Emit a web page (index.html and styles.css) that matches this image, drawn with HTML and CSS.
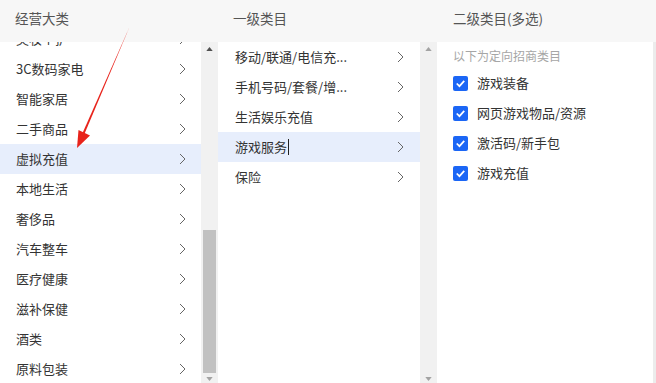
FILE: index.html
```html
<!DOCTYPE html>
<html lang="zh-CN">
<head>
<meta charset="utf-8">
<link rel="stylesheet" href="styles.css">
</head>
<body>
<div class="app">
  <div class="col col1">
    <div class="head">经营大类</div>
    <div class="body">
      <div class="list">
        <div class="inner scrolled">
          <div class="row"><span>美妆个护</span><svg class="chev" viewBox="0 0 7 12"><path d="M1 1 L6 6 L1 11"/></svg></div>
          <div class="row"><span>3C数码家电</span><svg class="chev" viewBox="0 0 7 12"><path d="M1 1 L6 6 L1 11"/></svg></div>
          <div class="row"><span>智能家居</span><svg class="chev" viewBox="0 0 7 12"><path d="M1 1 L6 6 L1 11"/></svg></div>
          <div class="row"><span>二手商品</span><svg class="chev" viewBox="0 0 7 12"><path d="M1 1 L6 6 L1 11"/></svg></div>
          <div class="row active"><span>虚拟充值</span><svg class="chev" viewBox="0 0 7 12"><path d="M1 1 L6 6 L1 11"/></svg></div>
          <div class="row"><span>本地生活</span><svg class="chev" viewBox="0 0 7 12"><path d="M1 1 L6 6 L1 11"/></svg></div>
          <div class="row"><span>奢侈品</span><svg class="chev" viewBox="0 0 7 12"><path d="M1 1 L6 6 L1 11"/></svg></div>
          <div class="row"><span>汽车整车</span><svg class="chev" viewBox="0 0 7 12"><path d="M1 1 L6 6 L1 11"/></svg></div>
          <div class="row"><span>医疗健康</span><svg class="chev" viewBox="0 0 7 12"><path d="M1 1 L6 6 L1 11"/></svg></div>
          <div class="row"><span>滋补保健</span><svg class="chev" viewBox="0 0 7 12"><path d="M1 1 L6 6 L1 11"/></svg></div>
          <div class="row"><span>酒类</span><svg class="chev" viewBox="0 0 7 12"><path d="M1 1 L6 6 L1 11"/></svg></div>
          <div class="row"><span>原料包装</span><svg class="chev" viewBox="0 0 7 12"><path d="M1 1 L6 6 L1 11"/></svg></div>
        </div>
      </div>
      <div class="sbar">
        <svg class="arr up dark" viewBox="0 0 8 5"><path d="M0 5 L4 0 L8 5Z"/></svg>
        <div class="track"><div class="thumb"></div></div>
        <svg class="arr down" viewBox="0 0 8 5"><path d="M0 0 L8 0 L4 5Z"/></svg>
      </div>
    </div>
  </div>
  <div class="col col2">
    <div class="head">一级类目</div>
    <div class="body">
      <div class="list">
        <div class="inner">
          <div class="row"><span>移动/联通/电信充...</span><svg class="chev" viewBox="0 0 7 12"><path d="M1 1 L6 6 L1 11"/></svg></div>
          <div class="row"><span>手机号码/套餐/增...</span><svg class="chev" viewBox="0 0 7 12"><path d="M1 1 L6 6 L1 11"/></svg></div>
          <div class="row"><span>生活娱乐充值</span><svg class="chev" viewBox="0 0 7 12"><path d="M1 1 L6 6 L1 11"/></svg></div>
          <div class="row active"><span>游戏服务<i class="caret"></i></span><svg class="chev" viewBox="0 0 7 12"><path d="M1 1 L6 6 L1 11"/></svg></div>
          <div class="row"><span>保险</span><svg class="chev" viewBox="0 0 7 12"><path d="M1 1 L6 6 L1 11"/></svg></div>
        </div>
      </div>
      <div class="sbar">
        <svg class="arr up" viewBox="0 0 8 5"><path d="M0 5 L4 0 L8 5Z"/></svg>
        <div class="track"></div>
        <svg class="arr down" viewBox="0 0 8 5"><path d="M0 0 L8 0 L4 5Z"/></svg>
      </div>
    </div>
  </div>
  <div class="col col3">
    <div class="head">二级类目(多选)</div>
    <div class="body">
      <div class="panel">
        <div class="tip">以下为定向招商类目</div>
        <div class="check"><span class="box"><svg viewBox="0 0 14 14"><path d="M3.5 7 L6 9.5 L10.5 4.5"/></svg></span><span>游戏装备</span></div>
        <div class="check"><span class="box"><svg viewBox="0 0 14 14"><path d="M3.5 7 L6 9.5 L10.5 4.5"/></svg></span><span>网页游戏物品/资源</span></div>
        <div class="check"><span class="box"><svg viewBox="0 0 14 14"><path d="M3.5 7 L6 9.5 L10.5 4.5"/></svg></span><span>激活码/新手包</span></div>
        <div class="check"><span class="box"><svg viewBox="0 0 14 14"><path d="M3.5 7 L6 9.5 L10.5 4.5"/></svg></span><span>游戏充值</span></div>
      </div>
      <div class="edge"></div>
    </div>
  </div>
  <svg class="pointer" viewBox="0 0 656 383" width="656" height="383">
    <path d="M129.5 27 L84 135 L82 134.2 Z" fill="#e8231b"/>
    <path d="M77 148 L78.5 130 L90 135.5 Z" fill="#e8231b"/>
  </svg>
</div>
</body>
</html>
```

FILE: styles.css
```css
* { box-sizing: border-box; }
html, body { margin: 0; padding: 0; }
body {
  width: 656px;
  height: 383px;
  overflow: hidden;
  background: #f7f7f7;
  font-family: "Noto Sans CJK SC", "Noto Sans", sans-serif;
  font-size: 13px;
  color: #333;
}
.app {
  position: relative;
  display: grid;
  grid-template-columns: 218px 219px 219px;
  height: 383px;
}
.col { display: flex; flex-direction: column; min-width: 0; }
.head {
  height: 42px;
  line-height: 36px;
  font-size: 13.5px;
  color: #555;
  background: #f7f7f7;
}
.col1 .head { padding-left: 15px; }
.col2 .head { padding-left: 15px; }
.col3 .head { padding-left: 16px; }
.body { flex: 1; display: flex; min-height: 0; }
.list {
  background: #fff;
  overflow: hidden;
  flex: none;
}
.col1 .list { width: 201px; }
.col2 .list { width: 202px; }
.inner.scrolled { margin-top: -18px; }
.row {
  height: 30px;
  display: flex;
  align-items: center;
  justify-content: space-between;
  white-space: nowrap;
  line-height: 18px;
}
.col1 .row { padding: 0 15px 0 16px; }
.col2 .row { padding: 0 16px 0 17px; }
.row.active { background: #e7eefc; }
.chev { width: 7px; height: 12px; flex: none; }
.chev path { fill: none; stroke: #666; stroke-width: 1; }
.caret {
  display: inline-block;
  width: 1px;
  height: 16px;
  background: #222;
  vertical-align: -3px;
  margin-left: 1px;
}
.sbar {
  width: 17px;
  flex: none;
  background: #f1f1f1;
  display: flex;
  flex-direction: column;
  align-items: center;
  padding: 5px 0 3px;
}
.arr { width: 7px; height: 4px; flex: none; }
.arr path { fill: #a3a3a3; }
.arr.dark path { fill: #505050; }
.track { flex: 1; width: 100%; display: flex; flex-direction: column; justify-content: flex-end; padding: 0 2px 4px; }
.thumb { height: 143px; background: #c1c1c1; }
.panel {
  flex: 1;
  background: #fff;
  padding: 5px 0 0 16px;
}
.edge { width: 3px; flex: none; background: #ececec; }
.tip { font-size: 12px; color: #a6a6a6; line-height: 18px; margin-bottom: 3px; }
.check {
  height: 30px;
  display: flex;
  align-items: center;
  gap: 9px;
  line-height: 18px;
}
.box {
  width: 15px;
  height: 15px;
  border-radius: 2px;
  background: #1b66f5;
  display: flex;
  flex: none;
}
.box svg { width: 15px; height: 15px; }
.box path { fill: none; stroke: #fff; stroke-width: 1.6; }
.pointer { position: absolute; left: 0; top: 0; pointer-events: none; }
```
